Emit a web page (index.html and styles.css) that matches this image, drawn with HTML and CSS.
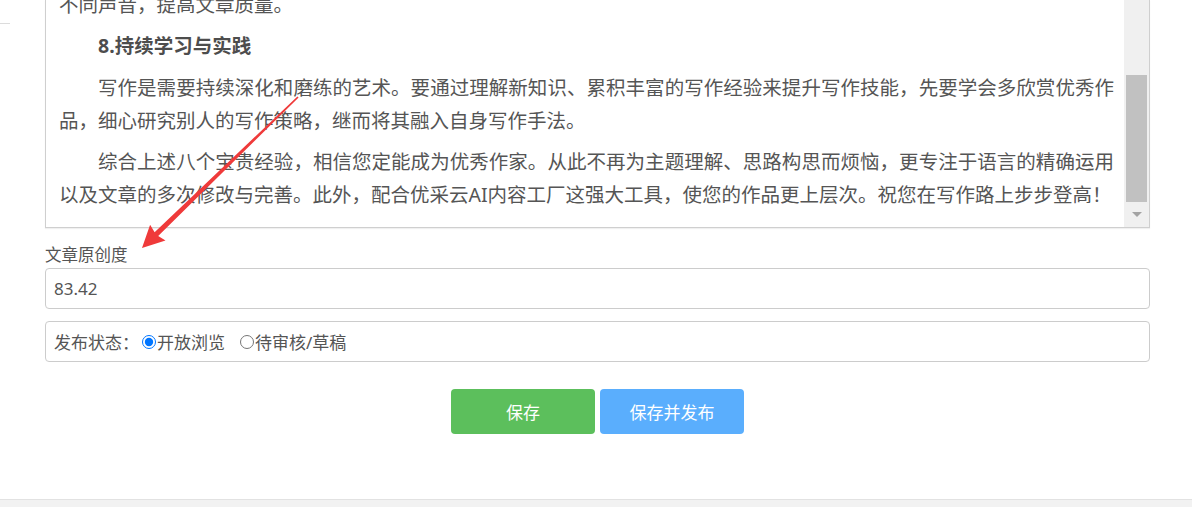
FILE: index.html
```html
<!DOCTYPE html>
<html lang="zh-CN">
  <head>
    <meta charset="UTF-8" />
    <meta name="viewport" content="width=device-width, initial-scale=1.0" />
    <title>文章编辑</title>
    <link rel="stylesheet" href="styles.css">
  </head>

  <body>
    <div class="page">
      <div class="gutter">
        <div class="gutter-line"></div>
      </div>

      <div class="main">
        <div class="editor">
          <div class="editor-text">
            <p class="first">不同声音，提高文章质量。</p>
            <p class="indent"><b>8.持续学习与实践</b></p>
            <p class="indent">写作是需要持续深化和磨练的艺术。要通过理解新知识、累积丰富的写作经验来提升写作技能，先要学会多欣赏优秀作品，细心研究别人的写作策略，继而将其融入自身写作手法。</p>
            <p class="indent">综合上述八个宝贵经验，相信您定能成为优秀作家。从此不再为主题理解、思路构思而烦恼，更专注于语言的精确运用以及文章的多次修改与完善。此外，配合优采云AI内容工厂这强大工具，使您的作品更上层次。祝您在写作路上步步登高！</p>
          </div>
          <div class="scrollbar">
            <div class="track-top"></div>
            <div class="thumb"></div>
            <div class="arrow-btn"><span class="arrow-down"></span></div>
          </div>
        </div>

        <div class="field-label">文章原创度</div>
        <input class="field-input" type="text" value="83.42">

        <div class="status-row">
          <span class="status-title">发布状态：</span>
          <label class="radio"><input type="radio" name="status" checked>开放浏览</label>
          <label class="radio"><input type="radio" name="status">待审核/草稿</label>
        </div>

        <div class="actions">
          <button class="btn btn-save">保存</button>
          <button class="btn btn-publish">保存并发布</button>
        </div>
      </div>
    </div>

    <div class="footer-band"></div>

    <!-- annotation arrow -->
    <svg class="mark-arrow" width="1192" height="507" viewBox="0 0 1192 507">
      <polygon fill="#ef3a3a" points="298.6,97.6 158.2,235.9 165.5,240.6 142,248 150.1,224.8 154.6,232.3 297.4,96.4"/>
    </svg>
  </body>
</html>
```

FILE: styles.css
```css
body {
  margin: 0;
  position: relative;
  width: 1192px;
  height: 507px;
  overflow: hidden;
  font-family: "Noto Sans", "Noto Sans CJK SC", sans-serif;
  color: #555;
  background: #fff;
}
.page {
  display: flex;
}
.gutter {
  width: 45px;
  flex: none;
}
.gutter-line {
  width: 10px;
  height: 1px;
  margin-top: 23px;
  background: #dcdcdc;
}
.main {
  width: 1105px;
}

/* editor */
.editor {
  display: flex;
  height: 228px;
  box-sizing: border-box;
  border: 1px solid #cfcfcf;
  border-top: none;
  box-shadow: 0 1px 1px rgba(0, 0, 0, 0.06);
  overflow: hidden;
}
.editor-text {
  flex: 1;
  padding: 0 10px 0 13px;
  font-size: 19.5px;
  line-height: 33px;
  text-align: justify;
  color: #555;
  overflow: hidden;
}
.editor-text p {
  margin: 0 0 8.5px;
}
.editor-text p.first {
  margin-top: -12.5px;
}
.editor-text .indent {
  text-indent: 2em;
}
.editor-text b {
  color: #4d4d4d;
}
.scrollbar {
  width: 25px;
  flex: none;
  display: flex;
  flex-direction: column;
  background: #f0f0f0;
}
.track-top {
  height: 75px;
}
.thumb {
  height: 127px;
  margin: 0 2px;
  background: #c1c1c1;
}
.arrow-btn {
  flex: 1;
  display: flex;
  align-items: center;
  justify-content: center;
}
.arrow-down {
  width: 0;
  height: 0;
  border-left: 5.5px solid transparent;
  border-right: 5.5px solid transparent;
  border-top: 5px solid #a3a3a3;
}

/* fields */
.field-label {
  margin: 17px 0 3px;
  font-size: 16.5px;
  line-height: 20px;
}
.field-input {
  display: block;
  width: 100%;
  height: 41px;
  box-sizing: border-box;
  margin: 0;
  padding: 0 8px;
  border: 1px solid #ccc;
  border-radius: 4px;
  font-family: "Noto Sans", "Noto Sans CJK SC", sans-serif;
  font-size: 17px;
  color: #555;
  outline: none;
}
.status-row {
  display: flex;
  align-items: center;
  height: 41px;
  box-sizing: border-box;
  margin-top: 12px;
  padding: 0 8px;
  border: 1px solid #ccc;
  border-radius: 4px;
  font-size: 17px;
}
.radio {
  display: flex;
  align-items: center;
  margin-right: 12px;
}
.radio input {
  width: 14px;
  height: 14px;
  margin: 0 1px 0 3px;
}

/* buttons */
.actions {
  display: flex;
  justify-content: center;
  gap: 5px;
  margin-top: 27px;
}
.btn {
  width: 144px;
  height: 45px;
  border: none;
  border-radius: 4px;
  font-family: "Noto Sans", "Noto Sans CJK SC", sans-serif;
  font-size: 17px;
  color: #fff;
  cursor: pointer;
}
.btn-save {
  background: #5cbf5c;
}
.btn-publish {
  background: #5aaefd;
}

.footer-band {
  margin-top: 65px;
  height: 8px;
  border-top: 1px solid #e2e2e2;
  background: #f2f2f2;
}

.mark-arrow {
  position: absolute;
  top: 0;
  left: 0;
  pointer-events: none;
}
```
